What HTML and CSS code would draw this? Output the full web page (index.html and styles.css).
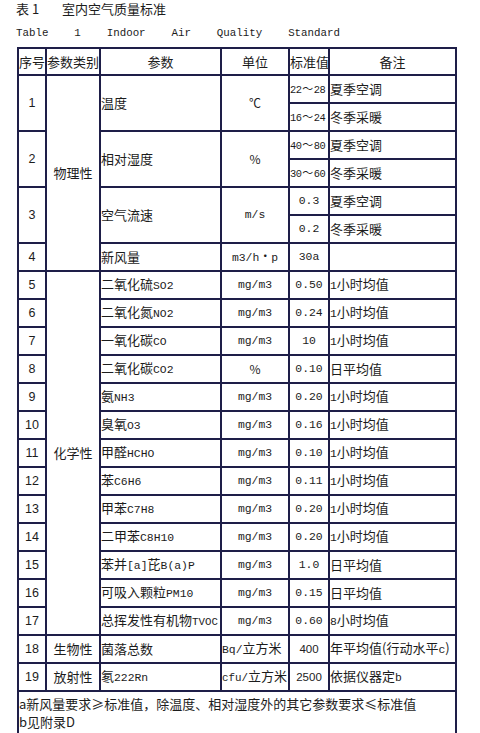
FILE: index.html
```html
<!DOCTYPE html>
<html lang="zh-CN">
<head>
<meta charset="utf-8">
<title>室内空气质量标准</title>
<link rel="stylesheet" href="styles.css">
</head>
<body>
<div class="title"><span class="t-no">表 1</span><span class="t-name">室内空气质量标准</span></div>
<div class="subtitle">Table    1    Indoor    Air    Quality    Standard</div>
<table class="std">
  <colgroup>
    <col class="c1"><col class="c2"><col class="c3"><col class="c4"><col class="c5"><col class="c6">
  </colgroup>
  <thead>
    <tr class="hd">
      <th>序号</th><th>参数类别</th><th>参数</th><th>单位</th><th>标准值</th><th>备注</th>
    </tr>
  </thead>
  <tbody>
    <tr>
      <td class="no" rowspan="2">1</td>
      <td class="cat" rowspan="7">物理性</td>
      <td class="par" rowspan="2">温度</td>
      <td class="unit sym" rowspan="2">℃</td>
      <td class="range"><span class="en">22</span><span class="tl">～</span><span class="en">28</span></td>
      <td class="rem">夏季空调</td>
    </tr>
    <tr>
      <td class="range"><span class="en">16</span><span class="tl">～</span><span class="en">24</span></td>
      <td class="rem">冬季采暖</td>
    </tr>
    <tr>
      <td class="no" rowspan="2">2</td>
      <td class="par" rowspan="2">相对湿度</td>
      <td class="unit sym" rowspan="2">%</td>
      <td class="range"><span class="en">40</span><span class="tl">～</span><span class="en">80</span></td>
      <td class="rem">夏季空调</td>
    </tr>
    <tr>
      <td class="range"><span class="en">30</span><span class="tl">～</span><span class="en">60</span></td>
      <td class="rem">冬季采暖</td>
    </tr>
    <tr>
      <td class="no" rowspan="2">3</td>
      <td class="par" rowspan="2">空气流速</td>
      <td class="unit en" rowspan="2">m/s</td>
      <td class="val en">0.3</td>
      <td class="rem">夏季空调</td>
    </tr>
    <tr>
      <td class="val en">0.2</td>
      <td class="rem">冬季采暖</td>
    </tr>
    <tr>
      <td class="no">4</td>
      <td class="par">新风量</td>
      <td class="unit"><span class="en">m3/h</span><span class="dot">·</span><span class="en">p</span></td>
      <td class="val en">30a</td>
      <td class="rem"></td>
    </tr>
    <tr>
      <td class="no">5</td>
      <td class="cat" rowspan="13">化学性</td>
      <td class="par">二氧化硫<span class="en">SO2</span></td>
      <td class="unit en">mg/m3</td>
      <td class="val en">0.50</td>
      <td class="rem"><span class="en">1</span>小时均值</td>
    </tr>
    <tr>
      <td class="no">6</td>
      <td class="par">二氧化氮<span class="en">NO2</span></td>
      <td class="unit en">mg/m3</td>
      <td class="val en">0.24</td>
      <td class="rem"><span class="en">1</span>小时均值</td>
    </tr>
    <tr>
      <td class="no">7</td>
      <td class="par">一氧化碳<span class="en">CO</span></td>
      <td class="unit en">mg/m3</td>
      <td class="val en">10</td>
      <td class="rem"><span class="en">1</span>小时均值</td>
    </tr>
    <tr>
      <td class="no">8</td>
      <td class="par">二氧化碳<span class="en">CO2</span></td>
      <td class="unit sym">%</td>
      <td class="val en">0.10</td>
      <td class="rem">日平均值</td>
    </tr>
    <tr>
      <td class="no">9</td>
      <td class="par">氨<span class="en">NH3</span></td>
      <td class="unit en">mg/m3</td>
      <td class="val en">0.20</td>
      <td class="rem"><span class="en">1</span>小时均值</td>
    </tr>
    <tr>
      <td class="no">10</td>
      <td class="par">臭氧<span class="en">O3</span></td>
      <td class="unit en">mg/m3</td>
      <td class="val en">0.16</td>
      <td class="rem"><span class="en">1</span>小时均值</td>
    </tr>
    <tr>
      <td class="no">11</td>
      <td class="par">甲醛<span class="en">HCHO</span></td>
      <td class="unit en">mg/m3</td>
      <td class="val en">0.10</td>
      <td class="rem"><span class="en">1</span>小时均值</td>
    </tr>
    <tr>
      <td class="no">12</td>
      <td class="par">苯<span class="en">C6H6</span></td>
      <td class="unit en">mg/m3</td>
      <td class="val en">0.11</td>
      <td class="rem"><span class="en">1</span>小时均值</td>
    </tr>
    <tr>
      <td class="no">13</td>
      <td class="par">甲苯<span class="en">C7H8</span></td>
      <td class="unit en">mg/m3</td>
      <td class="val en">0.20</td>
      <td class="rem"><span class="en">1</span>小时均值</td>
    </tr>
    <tr>
      <td class="no">14</td>
      <td class="par">二甲苯<span class="en">C8H10</span></td>
      <td class="unit en">mg/m3</td>
      <td class="val en">0.20</td>
      <td class="rem"><span class="en">1</span>小时均值</td>
    </tr>
    <tr>
      <td class="no">15</td>
      <td class="par">苯并<span class="en">[a]</span>芘<span class="en">B(a)P</span></td>
      <td class="unit en">mg/m3</td>
      <td class="val en">1.0</td>
      <td class="rem">日平均值</td>
    </tr>
    <tr>
      <td class="no">16</td>
      <td class="par">可吸入颗粒<span class="en">PM10</span></td>
      <td class="unit en">mg/m3</td>
      <td class="val en">0.15</td>
      <td class="rem">日平均值</td>
    </tr>
    <tr>
      <td class="no">17</td>
      <td class="par">总挥发性有机物<span class="en tight">TVOC</span></td>
      <td class="unit en">mg/m3</td>
      <td class="val en">0.60</td>
      <td class="rem"><span class="en">8</span>小时均值</td>
    </tr>
    <tr>
      <td class="no">18</td>
      <td class="cat2">生物性</td>
      <td class="par">菌落总数</td>
      <td class="unit-l"><span class="en">Bq/</span>立方米</td>
      <td class="val sans">400</td>
      <td class="rem">年平均值(行动水平<span class="en">c</span>)</td>
    </tr>
    <tr>
      <td class="no">19</td>
      <td class="cat2">放射性</td>
      <td class="par">氡<span class="en">222Rn</span></td>
      <td class="unit-l"><span class="en tight">cfu/</span>立方米</td>
      <td class="val sans">2500</td>
      <td class="rem">依据仪器定<span class="en">b</span></td>
    </tr>
    <tr class="note">
      <td colspan="6">a新风量要求≥标准值，除温度、相对湿度外的其它参数要求≤标准值<br>b见附录D</td>
    </tr>
  </tbody>
</table>
</body>
</html>
```
FILE: styles.css
```css
html, body {
  margin: 0;
  padding: 0;
  background: #ffffff;
}
body {
  padding-left: 16px;
  color: #1c1c1c;
  font-family: "Noto Sans CJK SC", sans-serif;
  font-size: 13px;
  overflow: hidden;
  height: 733px;
}
.title {
  height: 17px;
  line-height: 17px;
  font-size: 13px;
  white-space: nowrap;
}
.t-no {
  display: inline-block;
  width: 46px;
}
.subtitle {
  margin-top: 8px;
  height: 16px;
  line-height: 16px;
  font-family: "Liberation Mono", monospace;
  font-size: 10.8px;
  white-space: pre;
}
.std {
  margin-top: 6px;
  margin-left: 1px;
  border-collapse: collapse;
  table-layout: fixed;
  width: 438px;
}
.c1 { width: 28px; }
.c2 { width: 54px; }
.c3 { width: 121px; }
.c4 { width: 68px; }
.c5 { width: 40px; }
.c6 { width: 127px; }
.std th, .std td {
  border: 2px solid #1e1e48;
  padding: 0;
  height: 28px;
  box-sizing: border-box;
  line-height: 16px;
  vertical-align: middle;
  white-space: nowrap;
  overflow: visible;
}
.std th {
  font-weight: normal;
  text-align: center;
  font-size: 13px;
  height: 27px;
}
.en {
  font-family: "Liberation Mono", monospace;
  font-size: 11.4px;
}
.tight {
  font-size: 10.8px;
}
.sans {
  font-family: "Liberation Sans", sans-serif;
  font-size: 11.5px;
}
.no {
  text-align: center;
  font-family: "Liberation Sans", sans-serif;
  font-size: 12.5px;
}
.cat, .cat2 {
  text-align: center;
  font-size: 13px;
}
.par {
  text-align: left;
}
.unit, .val {
  text-align: center;
}
.sym {
  font-size: 12px;
}
.dot {
  display: inline-block;
  width: 12px;
  text-align: center;
  font-size: 12px;
}
.range {
  text-align: left;
  letter-spacing: -0.4px;
}
.range .en {
  font-size: 10.4px;
}
.tl {
  display: inline-block;
  width: 12px;
  text-align: center;
  font-size: 11px;
  letter-spacing: 0;
}
.unit-l {
  text-align: left;
  padding-left: 1px;
}
.rem {
  text-align: left;
}
.note td {
  height: 60px;
  vertical-align: top;
  padding-top: 3px;
  line-height: 18px;
  font-size: 13px;
  text-align: left;
}
```
